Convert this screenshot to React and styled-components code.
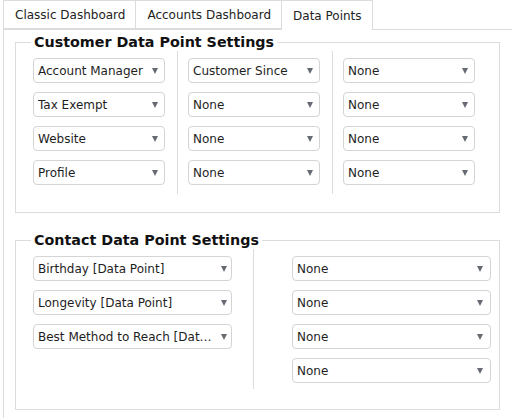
import React from "react";
import styled, { createGlobalStyle } from "styled-components";

const GlobalStyle = createGlobalStyle`
  html, body {
    margin: 0;
    padding: 0;
    background: #ffffff;
  }
  body {
    font-family: "DejaVu Sans", Verdana, sans-serif;
    color: #222222;
    overflow: hidden;
  }
`;

const Page = styled.div`
  width: 512px;
  height: 418px;
  box-sizing: border-box;
  padding-left: 3px;
  display: flex;
  flex-direction: column;
  overflow: hidden;
`;

const TabBar = styled.div`
  display: flex;
  height: 29px;
  flex: none;
  position: relative;
  z-index: 1;
`;

const Tab = styled.div`
  box-sizing: border-box;
  height: ${(p) => (p.$active ? "30px" : "29px")};
  padding: 0 10px 0 11px;
  display: flex;
  align-items: center;
  font-size: 12px;
  color: #222;
  background: #fff;
  border: 1px solid #dcdcdc;
  border-bottom: ${(p) => (p.$active ? "none" : "1px solid #dcdcdc")};
  margin-left: -1px;
  &:first-child {
    margin-left: 0;
  }
`;

const Panel = styled.div`
  flex: 1;
  border: 1px solid #dcdcdc;
  border-right: none;
  border-bottom: none;
  padding: 4px 0 0 11px;
`;

const Fieldset = styled.fieldset`
  width: 485px;
  box-sizing: border-box;
  border: 1px solid #dcdcdc;
  margin: 0 0 ${(p) => p.$gap || 0}px 0;
  padding: 0 7px ${(p) => p.$bottom}px 7px;
`;

const Legend = styled.legend`
  font-size: 14.3px;
  font-weight: bold;
  color: #111;
  padding: 0 3px;
  margin-left: 8px;
  line-height: 17px;
`;

const Columns = styled.div`
  display: flex;
  align-items: stretch;
`;

const Column = styled.div`
  display: flex;
  flex-direction: column;
  align-items: ${(p) => (p.$right ? "flex-end" : "flex-start")};
  gap: 9px;
  padding: 7px ${(p) => p.$padRight}px ${(p) => p.$padBottom}px ${(p) => p.$padLeft}px;
  border-right: ${(p) => (p.$line ? "1px solid #dcdcdc" : "none")};
  flex: ${(p) => (p.$grow ? "1" : "none")};
`;

const Select = styled.div`
  box-sizing: border-box;
  width: ${(p) => p.$width}px;
  height: 25px;
  border: 1px solid #d4d4d4;
  border-radius: 4px;
  background: #fff;
  display: flex;
  align-items: center;
  padding: 0 ${(p) => p.$padRight}px 0 4px;
  font-size: 12px;
  color: #1e1e1e;
`;

const SelectLabel = styled.span`
  flex: 1;
  min-width: 0;
  white-space: nowrap;
  overflow: hidden;
  text-overflow: ellipsis;
`;

const Caret = styled.span`
  width: 0;
  height: 0;
  margin-left: 6px;
  border-left: 3.5px solid transparent;
  border-right: 3.5px solid transparent;
  border-top: 6px solid #666b73;
  flex: none;
`;

const Dropdown = ({ label, width, padRight = 7 }) => (
  <Select $width={width} $padRight={padRight}>
    <SelectLabel>{label}</SelectLabel>
    <Caret />
  </Select>
);

const customer = [
  ["Account Manager", "Tax Exempt", "Website", "Profile"],
  ["Customer Since", "None", "None", "None"],
  ["None", "None", "None", "None"],
];

const contactLeft = ["Birthday [Data Point]", "Longevity [Data Point]", "Best Method to Reach [Data Point]"];
const contactRight = ["None", "None", "None", "None"];

export default function App() {
  return (
    <>
      <GlobalStyle />
      <Page>
        <TabBar>
          <Tab>Classic Dashboard</Tab>
          <Tab>Accounts Dashboard</Tab>
          <Tab $active>Data Points</Tab>
        </TabBar>
        <Panel>
          <Fieldset $bottom={18} $gap={19}>
            <Legend>Customer Data Point Settings</Legend>
            <Columns>
              {customer.map((col, i) => (
                <Column key={i} $line={i < 2} $padLeft={10} $padRight={12} $padBottom={9}>
                  {col.map((label, j) => (
                    <Dropdown key={j} label={label} width={132} padRight={6} />
                  ))}
                </Column>
              ))}
            </Columns>
          </Fieldset>
          <Fieldset $bottom={20}>
            <Legend>Contact Data Point Settings</Legend>
            <Columns>
              <Column $line $padLeft={10} $padRight={21} $padBottom={6}>
                {contactLeft.map((label, j) => (
                  <Dropdown key={j} label={label} width={199} padRight={4} />
                ))}
              </Column>
              <Column $grow $right $padLeft={10} $padRight={1} $padBottom={6}>
                {contactRight.map((label, j) => (
                  <Dropdown key={j} label={label} width={199} />
                ))}
              </Column>
            </Columns>
          </Fieldset>
        </Panel>
      </Page>
    </>
  );
}
